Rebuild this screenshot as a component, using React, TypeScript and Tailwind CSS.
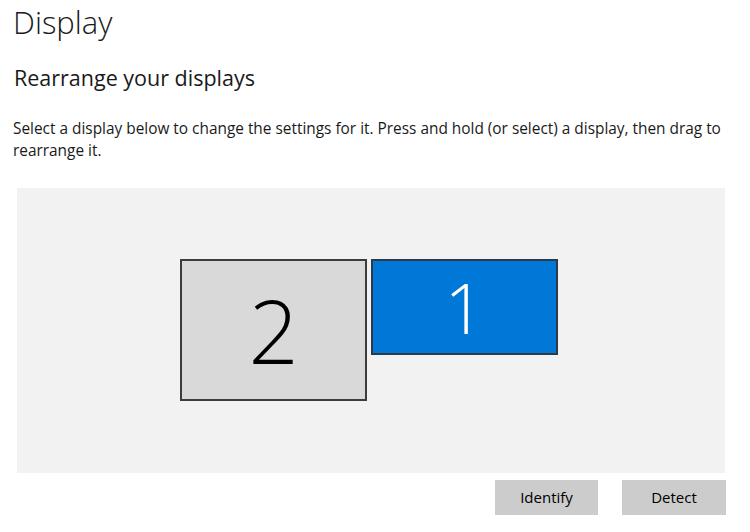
export default function App() {
  return (
    <div className="w-[750px] h-[532px] bg-white overflow-hidden text-[#1a1a1a] font-['Open_Sans',sans-serif]">
      <h1 className="pl-[13px] pt-[2px] text-[31px] font-light leading-[40px]">Display</h1>
      <h2 className="pl-[14px] pt-[22px] text-[21.5px] leading-[28px]">Rearrange your displays</h2>
      <p className="pl-[13px] pr-[18px] pt-[26px] text-[15.4px] leading-[22px]">
        Select a display below to change the settings for it. Press and hold (or select) a display, then drag to rearrange it.
      </p>

      <div className="ml-[17px] mt-[26px] w-[708px] h-[285px] bg-[#f2f2f2] flex items-start pl-[163px] pt-[71px] gap-[4px]">
        <div className="w-[187px] h-[142px] bg-[#d9d9d9] border-2 border-[#3c3c3c] flex items-center justify-center">
          <span className="text-[88px] font-light leading-none text-black">2</span>
        </div>
        <div className="w-[187px] h-[96px] bg-[#0078d7] border-2 border-[#2d3a48] flex items-center justify-center">
          <span className="text-[70px] font-light leading-none text-white">1</span>
        </div>
      </div>

      <div className="flex justify-end gap-[24px] pr-[24px] mt-[7px]">
        <button className="w-[103px] h-[35px] bg-[#cccccc] text-[15px] text-black">Identify</button>
        <button className="w-[104px] h-[35px] bg-[#cccccc] text-[15px] text-black">Detect</button>
      </div>
    </div>
  );
}
